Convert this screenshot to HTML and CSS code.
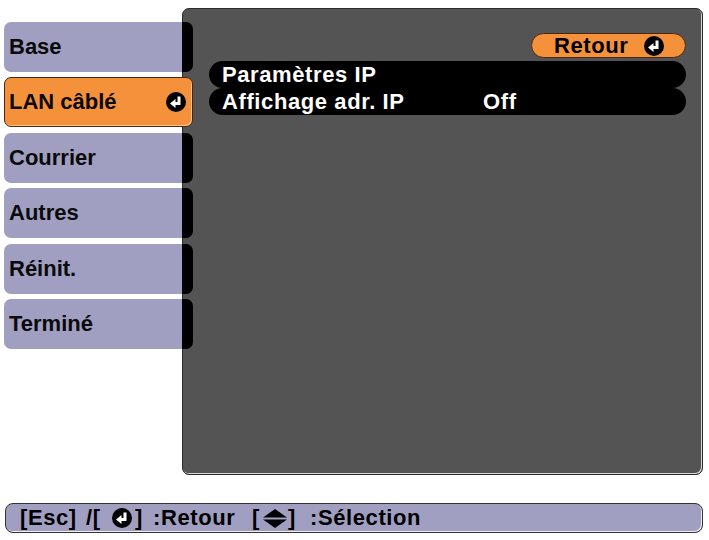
FILE: index.html
```html
<!DOCTYPE html>
<html lang="fr">
<head>
<meta charset="utf-8">
<title>LAN câblé</title>
<link rel="stylesheet" href="styles.css">
</head>
<body>
<div class="main">
  <nav class="tabs">
    <div class="tab">Base</div>
    <div class="tab tab-active">
      <span>LAN câblé</span>
      <svg class="ret" viewBox="0 0 20 20" width="20" height="20"><circle cx="10" cy="10" r="10" fill="#000"/><path d="M13 4.5V11.5H8" fill="none" stroke="#fff" stroke-width="3"/><path d="M9.5 7L4 11.5L9.5 16Z" fill="#fff"/></svg>
    </div>
    <div class="tab">Courrier</div>
    <div class="tab">Autres</div>
    <div class="tab">Réinit.</div>
    <div class="tab">Terminé</div>
  </nav>
  <section class="panel">
    <div class="panel-head">
      <div class="back">
        <span>Retour</span>
        <svg class="ret" viewBox="0 0 20 20" width="20" height="20"><circle cx="10" cy="10" r="10" fill="#000"/><path d="M13 4.5V11.5H8" fill="none" stroke="#fff" stroke-width="3"/><path d="M9.5 7L4 11.5L9.5 16Z" fill="#fff"/></svg>
      </div>
    </div>
    <div class="rows">
      <div class="row"><span class="label">Paramètres IP</span></div>
      <div class="row"><span class="label">Affichage adr. IP</span><span class="value">Off</span></div>
    </div>
  </section>
</div>
<footer class="help">
  <span class="h-esc">[Esc]</span>
  <span class="h-slash">/[</span>
  <svg class="ret h-ret" viewBox="0 0 20 20" width="20" height="20"><circle cx="10" cy="10" r="10" fill="#000"/><path d="M13 4.5V11.5H8" fill="none" stroke="#fff" stroke-width="3"/><path d="M9.5 7L4 11.5L9.5 16Z" fill="#fff"/></svg>
  <span class="h-close1">]</span>
  <span class="h-retour">:Retour</span>
  <span class="h-open2">[</span>
  <svg class="updown" viewBox="0 0 24 19" width="24" height="19"><polygon points="12,0 24,8.5 0,8.5" fill="#000"/><polygon points="0,10.5 24,10.5 12,19" fill="#000"/></svg>
  <span class="h-close2">]</span>
  <span class="h-sel">:Sélection</span>
</footer>
</body>
</html>
```

FILE: styles.css
```css
* { box-sizing: border-box; }

body {
  margin: 0;
  background: #fff;
  font-family: "Liberation Sans", Arial, sans-serif;
  font-weight: bold;
  font-size: 22px;
  color: #000;
}

.main {
  display: flex;
  margin: 8px 6px 0 4px;
  height: 467px;
}

.tabs {
  width: 178px;
  flex: none;
  padding-top: 14px;
  display: flex;
  flex-direction: column;
  gap: 5.4px;
}

.tab {
  position: relative;
  z-index: 1;
  width: 189px;
  height: 50px;
  flex: none;
  border-radius: 7px;
  background: linear-gradient(to right, #a09fc1 178px, #000 178px);
  display: flex;
  align-items: center;
  padding-left: 5px;
  color: #0a0a0a;
}

.tab-active {
  background: #f5913a;
  border: 1px solid #4a2810;
  padding-left: 4px;
  padding-right: 6px;
  justify-content: space-between;
  box-shadow: inset -1px -1px 0 #fbc48f;
}

.ret { display: block; flex: none; }

.panel {
  flex: 1;
  background: #545454;
  border: 1px solid #2b2b2b;
  border-radius: 7px;
  box-shadow: inset -1px -1px 0 #d8d8d8;
  padding: 24px 16px 0 26px;
}

.panel-head {
  display: flex;
  justify-content: flex-end;
}

.back {
  width: 155px;
  height: 25px;
  border-radius: 13px;
  background: #f5913a;
  border: 1px solid #4a2810;
  display: flex;
  align-items: center;
  padding: 0 21px 0 22px;
  letter-spacing: 0.6px;
  justify-content: space-between;
}

.rows {
  margin-top: 3px;
}

.row {
  height: 27px;
  border-radius: 13.5px;
  background: #000;
  color: #fff;
  display: flex;
  align-items: center;
  padding-left: 13px;
  letter-spacing: 0.6px;
}

.label { width: 261px; }

.help {
  margin: 28px 6px 0 5px;
  height: 30px;
  background: #a09fc1;
  border: 1px solid #333;
  border-radius: 8px;
  box-shadow: inset -1px -1px 0 #eee;
  display: flex;
  align-items: center;
  padding-left: 14px;
  letter-spacing: 0.6px;
  white-space: nowrap;
}

.help span { flex: none; }
.h-esc { width: 66px; }
.h-slash { width: 26px; }
.h-ret { margin-right: 3px; }
.h-close1 { width: 18px; }
.h-retour { width: 99px; }
.h-open2 { width: 11px; }
.updown { display: block; flex: none; margin-right: 1px; }
.h-close2 { width: 22px; }
```
